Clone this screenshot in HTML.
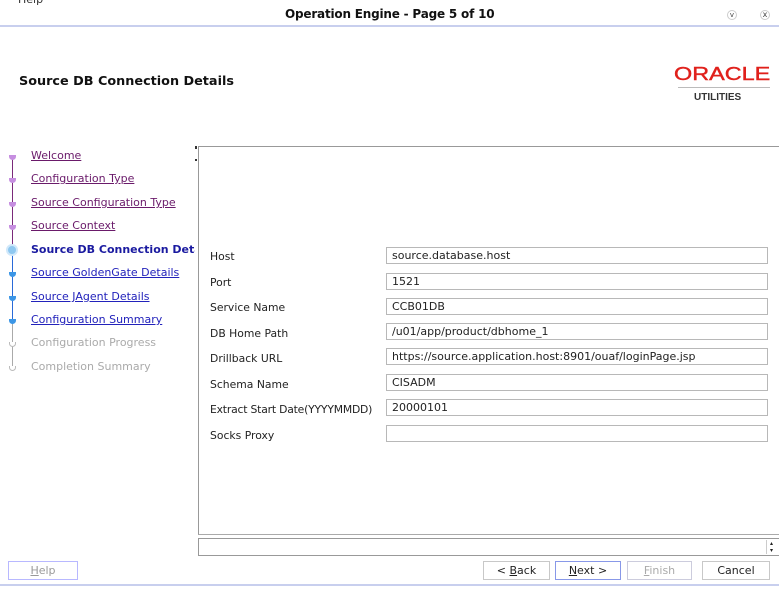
<!DOCTYPE html>
<html><head><style>
*{margin:0;padding:0;box-sizing:border-box}
body{width:779px;height:589px;background:#fff;position:relative;overflow:hidden;font-family:"DejaVu Sans","Liberation Sans",sans-serif;font-size:11px;color:#222}
.a{position:absolute;white-space:nowrap}
.lbl{position:absolute;left:210px;font-size:10.8px;color:#222;white-space:nowrap}
.inp{position:absolute;left:386px;width:382px;height:17px;border:1px solid #b8b8b8;font-size:11px;padding:1px 0 0 5px;color:#222;white-space:nowrap}
.nav{position:absolute;left:31px;font-size:11px;text-decoration:underline;white-space:nowrap}
.btn{position:absolute;top:561px;height:19px;border:1px solid #c8c8c8;text-align:center;font-size:11px;line-height:17px;background:#fff}
.dot{position:absolute;left:9px;width:7px;height:5px;border-radius:0 0 4px 4px}
</style></head><body>
<div class="a" style="left:18px;top:-7px;font-size:11px;color:#333">Help</div>
<div class="a" style="left:285px;top:7px;font-weight:bold;font-size:12px;color:#111;letter-spacing:-0.2px">Operation Engine - Page 5 of 10</div>
<div class="a" style="left:727px;top:10px;width:10px;height:10px;border:1px solid #ccc;border-radius:5px;font-size:7px;line-height:8px;text-align:center;color:#444">v</div>
<div class="a" style="left:760px;top:10px;width:10px;height:10px;border:1px solid #ccc;border-radius:5px;font-size:8px;line-height:8px;text-align:center;color:#444">x</div>
<div class="a" style="left:0;top:25px;width:779px;height:2px;background:#c8cfee"></div>
<div class="a" style="left:19px;top:74px;font-weight:bold;font-size:12.8px;color:#111">Source DB Connection Details</div>
<div class="a" style="left:674px;top:64px;font-size:18px;color:#e0201b;font-family:'Liberation Sans',sans-serif;transform:scaleX(1.3);transform-origin:left;-webkit-text-stroke:0.4px #e0201b">ORACLE</div>
<div class="a" style="left:678px;top:87px;width:92px;height:1px;background:#bbb"></div>
<div class="a" style="left:694px;top:92px;font-size:10px;font-weight:bold;color:#333;font-family:'Liberation Sans',sans-serif">UTILITIES</div>

<div class="a" style="left:12px;top:157px;width:1px;height:93px;background:#7a2a7a"></div>
<div class="a" style="left:12px;top:250px;width:1px;height:70px;background:#2a6ad8"></div>
<div class="a" style="left:12px;top:320px;width:1px;height:47px;background:#aaa"></div>
<div class="dot" style="top:155px;background:#c68ee0"></div>
<div class="dot" style="top:178px;background:#c68ee0"></div>
<div class="dot" style="top:202px;background:#c68ee0"></div>
<div class="dot" style="top:225px;background:#c68ee0"></div>
<div class="a" style="left:6px;top:244px;width:12px;height:12px;border-radius:6px;background:#8fc8f0;border:2px solid #d0e8fa"></div>
<div class="dot" style="top:272px;background:#3c96e6"></div>
<div class="dot" style="top:296px;background:#3c96e6"></div>
<div class="dot" style="top:319px;background:#3c96e6"></div>
<div class="dot" style="top:342px;border:1px solid #bbb;border-top:none;background:#fff"></div>
<div class="dot" style="top:366px;border:1px solid #bbb;border-top:none;background:#fff"></div>
<div class="nav" style="top:149px;color:#6a1a6a">Welcome</div>
<div class="nav" style="top:172px;color:#6a1a6a">Configuration Type</div>
<div class="nav" style="top:196px;color:#6a1a6a">Source Configuration Type</div>
<div class="nav" style="top:219px;color:#6a1a6a">Source Context</div>
<div class="nav" style="top:243px;color:#1a1aa0;font-weight:bold;text-decoration:none;width:164px;overflow:hidden">Source DB Connection Details</div>
<div class="nav" style="top:266px;color:#2222bb">Source GoldenGate Details</div>
<div class="nav" style="top:290px;color:#2222bb">Source JAgent Details</div>
<div class="nav" style="top:313px;color:#2222bb">Configuration Summary</div>
<div class="nav" style="top:336px;color:#aaa;text-decoration:none">Configuration Progress</div>
<div class="nav" style="top:360px;color:#aaa;text-decoration:none">Completion Summary</div>

<div class="a" style="left:198px;top:146px;width:581px;height:389px;border:1px solid #999;border-right:none;border-bottom:1px solid #aaa"></div>
<div class="a" style="left:195px;top:146px;width:2px;height:3px;background:#333"></div>
<div class="a" style="left:195px;top:159px;width:2px;height:2px;background:#333"></div>

<div class="lbl" style="top:250px">Host</div><div class="inp" style="top:247px">source.database.host</div>
<div class="lbl" style="top:276px">Port</div><div class="inp" style="top:273px">1521</div>
<div class="lbl" style="top:301px">Service Name</div><div class="inp" style="top:298px">CCB01DB</div>
<div class="lbl" style="top:327px">DB Home Path</div><div class="inp" style="top:323px">/u01/app/product/dbhome_1</div>
<div class="lbl" style="top:352px">Drillback URL</div><div class="inp" style="top:348px">https://source.application.host:8901/ouaf/loginPage.jsp</div>
<div class="lbl" style="top:378px">Schema Name</div><div class="inp" style="top:374px">CISADM</div>
<div class="lbl" style="top:403px;letter-spacing:-0.2px">Extract Start Date(YYYYMMDD)</div><div class="inp" style="top:399px">20000101</div>
<div class="lbl" style="top:429px">Socks Proxy</div><div class="inp" style="top:425px"></div>

<div class="a" style="left:198px;top:538px;width:581px;height:18px;border:1px solid #999;border-right:none"></div>
<div class="a" style="left:766px;top:540px;width:10px;height:14px;border-left:1px solid #ccc;font-size:6px;line-height:7px;text-align:center">▴<br>▾</div>

<div class="btn" style="left:8px;width:70px;border-color:#b8b8ff;color:#999"><u>H</u>elp</div>
<div class="btn" style="left:483px;width:67px">&lt; <u>B</u>ack</div>
<div class="btn" style="left:555px;width:66px;border-color:#8898e8"><u>N</u>ext &gt;</div>
<div class="btn" style="left:627px;width:65px;border-color:#ccd;color:#aaa"><u>F</u>inish</div>
<div class="btn" style="left:702px;width:68px">Cancel</div>
<div class="a" style="left:0;top:584px;width:779px;height:2px;background:#c8cfee"></div>
</body></html>
